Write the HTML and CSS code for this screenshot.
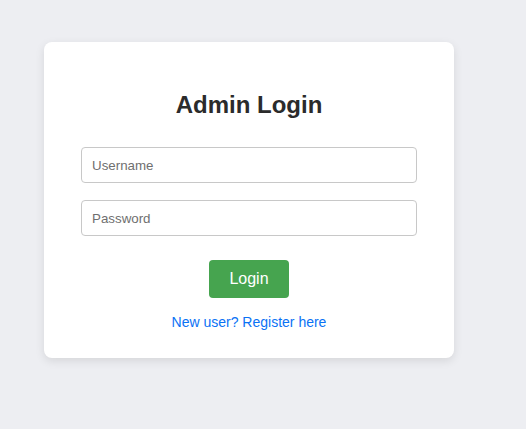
FILE: index.html
```html
<!DOCTYPE html>
<html lang="en">
<head>
<meta charset="utf-8">
<title>Admin Login</title>
<link rel="stylesheet" href="styles.css">
</head>
<body>
  <div class="card">
    <h2 class="title">Admin Login</h2>
    <form class="form">
      <input class="field" type="text" placeholder="Username">
      <input class="field" type="password" placeholder="Password">
      <button class="btn" type="button">Login</button>
    </form>
    <a class="link" href="#">New user? Register here</a>
  </div>
</body>
</html>
```

FILE: styles.css
```css
html, body {
  margin: 0;
  padding: 0;
}
body {
  background: #edeef2;
  font-family: "Liberation Sans", Arial, sans-serif;
  min-height: 429px;
  padding: 42px 0 0 44px;
  box-sizing: border-box;
}
.card {
  width: 410px;
  box-sizing: border-box;
  background: #ffffff;
  border-radius: 8px;
  box-shadow: 0 3px 10px rgba(0, 0, 0, 0.1);
  padding: 49px 37px 28px;
  display: flex;
  flex-direction: column;
  align-items: center;
}
.title {
  margin: 0;
  font-size: 24px;
  line-height: 28px;
  font-weight: bold;
  color: #2b2b2b;
  text-align: center;
}
.form {
  width: 100%;
  margin-top: 28px;
  display: flex;
  flex-direction: column;
  align-items: center;
}
.field {
  width: 100%;
  height: 36px;
  box-sizing: border-box;
  padding: 0 10px;
  border: 1px solid #c8c8c8;
  border-radius: 4px;
  font-family: "Liberation Sans", Arial, sans-serif;
  font-size: 13.33px;
  color: #333;
  background: #fff;
  margin: 0 0 17px;
}
.field::placeholder {
  color: #6f6f6f;
}
.field + .field {
  margin-bottom: 24px;
}
.btn {
  height: 38px;
  padding: 0 20px;
  border: none;
  border-radius: 4px;
  background: #46a44f;
  color: #ffffff;
  font-family: "Liberation Sans", Arial, sans-serif;
  font-size: 16px;
  line-height: 18px;
}
.link {
  margin-top: 16px;
  font-size: 14px;
  line-height: 16px;
  color: #0a72f5;
  text-decoration: none;
}
```
